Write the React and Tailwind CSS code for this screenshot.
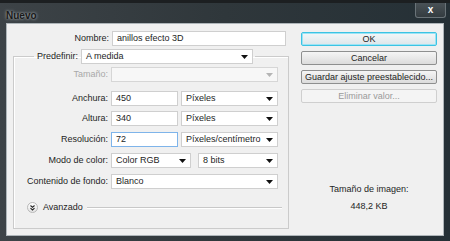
import { useState } from "react";

const font = "font-['Liberation_Sans',Arial,sans-serif]";

function Arrow({ disabled }) {
  return (
    <svg width="7" height="4" viewBox="0 0 7 4" className="shrink-0">
      <path d="M0 0h7L3.5 4z" fill={disabled ? "#b5b5b5" : "#111"} />
    </svg>
  );
}

function Select({ value, className = "", disabled }) {
  return (
    <div
      className={`h-[15px] flex items-center justify-between pl-[4px] pr-[4px] border ${
        disabled ? "border-[#d6d6d6] bg-[#f7f7f7]" : "border-[#cfcfcf] bg-white"
      } ${className}`}
    >
      <span className="whitespace-nowrap leading-none">{value}</span>
      <Arrow disabled={disabled} />
    </div>
  );
}

function Input({ value, className = "", focused }) {
  return (
    <div
      className={`h-[15px] flex items-center pl-[4px] bg-white border ${
        focused ? "border-[#7eb4ea]" : "border-[#cfcfcf]"
      } ${className}`}
    >
      <span className="leading-none">{value}</span>
    </div>
  );
}

function Row({ label, disabled, children, className = "" }) {
  return (
    <div className={`flex items-center ${className}`}>
      <div
        className={`w-[97px] text-right pr-[3px] leading-none whitespace-nowrap ${
          disabled ? "text-[#a8a8a8]" : "text-[#1e1e1e]"
        }`}
      >
        {label}
      </div>
      {children}
    </div>
  );
}

function Button({ children, primary, disabled }) {
  return (
    <div
      className={`h-[14px] w-[136px] flex items-center justify-center rounded-[2px] leading-none whitespace-nowrap border ${
        primary
          ? "border-[#3cc3e3] shadow-[inset_0_0_0_1px_#9be4f5] bg-gradient-to-b from-[#f4f7f8] to-[#dde6ea]"
          : disabled
          ? "border-[#cfcfcf] bg-[#f4f4f4] text-[#9a9a9a]"
          : "border-[#8e8f8f] bg-gradient-to-b from-[#f5f5f5] to-[#dcdcdc]"
      }`}
    >
      {children}
    </div>
  );
}

export default function App() {
  const [name] = useState("anillos efecto 3D");

  return (
    <div
      className={`${font} text-[9px] text-[#1e1e1e] w-[450px] h-[241px] bg-gradient-to-r from-[#3d4347] via-[#2f373b] to-[#253036] flex flex-col overflow-hidden`}
    >
      {/* title bar */}
      <div className="h-[23px] flex items-start justify-between pt-[3px] border-t-[3px] border-[#1c1f21]">
        <div className="pl-[6px] pt-[5px] text-[10px] font-bold text-[#1a1a1a] [text-shadow:0_0_3px_#c8d0d4] leading-none">
          Nuevo
        </div>
        <div className="mr-[4px] -mt-[3px] w-[31px] h-[15px] flex items-center justify-center border border-[#6a7378] border-t-0 rounded-b-[3px] bg-gradient-to-b from-[#4a5257] to-[#343c40]">
          <span className="text-white font-bold text-[10px] leading-none">x</span>
        </div>
      </div>

      {/* client */}
      <div className="mx-[6px] h-[213px] bg-[#f0f0f0] border border-[#aeb5b9] flex">
        {/* left column */}
        <div className="w-[283px] flex flex-col">
          <div className="flex items-center mt-[7px]">
            <div className="w-[105px] text-right pr-[3px] leading-none">Nombre:</div>
            <Input value={name} className="w-[174px]" />
          </div>

          <fieldset className="ml-[6px] mt-[3px] w-[276px] h-[180px] border border-[#cbcbcb] shadow-[inset_1px_1px_0_#ffffff] px-0 pb-0">
            <legend className="ml-[20px] flex items-center">
              <span className="pl-[3px] pr-[3px] leading-none">Predefinir:</span>
              <Select value="A medida" className="w-[172px]" />
              <span className="w-[2px]" />
            </legend>

            <div className="flex flex-col mt-[3px]">
              <Row label="Tamaño:" disabled>
                <Select value="" className="w-[167px]" disabled />
              </Row>
              <Row label="Anchura:" className="mt-[9px]">
                <Input value="450" className="w-[67px]" />
                <Select value="Píxeles" className="w-[97px] ml-[3px]" />
              </Row>
              <Row label="Altura:" className="mt-[5px]">
                <Input value="340" className="w-[67px]" />
                <Select value="Píxeles" className="w-[97px] ml-[3px]" />
              </Row>
              <Row label="Resolución:" className="mt-[6px]">
                <Input value="72" className="w-[67px]" focused />
                <Select value="Píxeles/centímetro" className="w-[97px] ml-[3px]" />
              </Row>
              <Row label="Modo de color:" className="mt-[6px]">
                <Select value="Color RGB" className="w-[80px]" />
                <Select value="8 bits" className="w-[80px] ml-[7px]" />
              </Row>
              <Row label="Contenido de fondo:" className="mt-[6px]">
                <Select value="Blanco" className="w-[167px]" />
              </Row>

              <div className="flex items-center mt-[13px] pl-[13px] pr-[6px]">
                <div className="w-[11px] h-[11px] rounded-full border border-[#b9b9b9] bg-gradient-to-b from-white to-[#e4e4e4] flex items-center justify-center">
                  <svg width="5" height="6" viewBox="0 0 5 6">
                    <path d="M0.5 0.5L2.5 2.3L4.5 0.5M0.5 3.2L2.5 5L4.5 3.2" stroke="#222" strokeWidth="1.1" fill="none" />
                  </svg>
                </div>
                <span className="ml-[5px] leading-none">Avanzado</span>
                <div className="flex-1 ml-[4px] h-[2px] border-t border-[#c8c8c8] border-b-white border-b" />
              </div>
            </div>
          </fieldset>
        </div>

        {/* right column */}
        <div className="ml-[11px] w-[136px] flex flex-col">
          <div className="mt-[8px] flex flex-col gap-[5px]">
            <Button primary>OK</Button>
            <Button>Cancelar</Button>
            <Button>Guardar ajuste preestablecido...</Button>
            <Button disabled>Eliminar valor...</Button>
          </div>
          <div className="mt-[82px] flex flex-col items-center gap-[8px] leading-none">
            <span>Tamaño de imagen:</span>
            <span>448,2 KB</span>
          </div>
        </div>
      </div>
    </div>
  );
}
